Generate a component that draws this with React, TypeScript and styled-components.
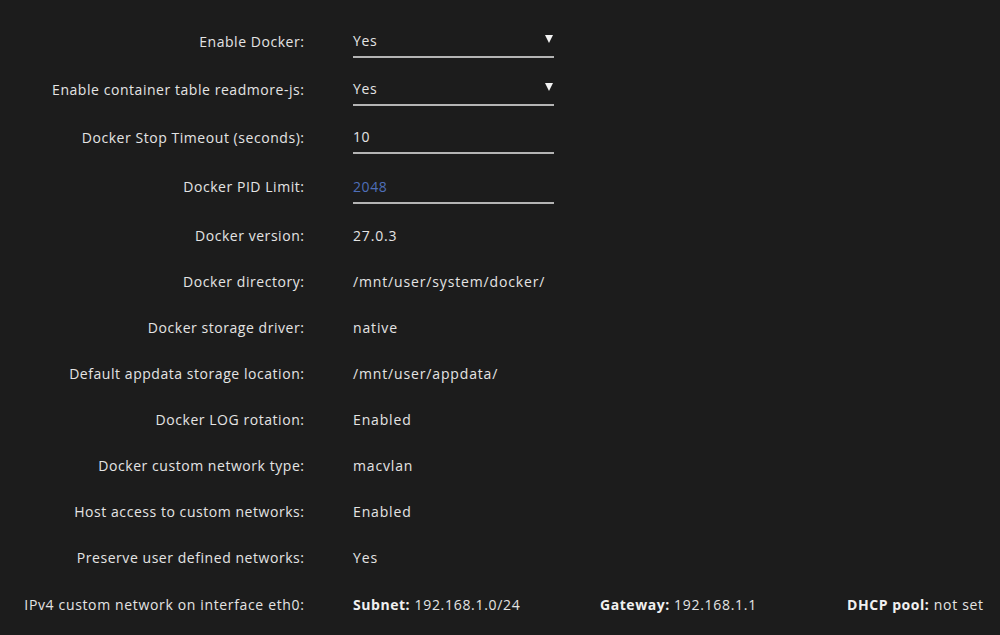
import React from "react";
import styled, { createGlobalStyle } from "styled-components";

const Global = createGlobalStyle`
  html, body { margin: 0; padding: 0; background: #1c1c1c; }
  body { font-family: "Open Sans", "Noto Sans", sans-serif; color: #e4e4e4; }
`;

const Page = styled.div`
  width: 1000px;
  height: 635px;
  overflow: hidden;
  background: #1c1c1c;
  padding-top: 17px;
  box-sizing: border-box;
`;

const Row = styled.div<{ $h: number }>`
  display: grid;
  grid-template-columns: 304px 1fr;
  column-gap: 49px;
  align-items: center;
  height: ${(p) => p.$h}px;
  font-size: 14px;
  letter-spacing: 0.55px;
`;

const Label = styled.div<{ $wide?: boolean }>`
  text-align: right;
  white-space: nowrap;
  color: #e4e4e4;
  margin-right: -0.55px;
  letter-spacing: ${(p) => (p.$wide ? "0.65px" : "0.55px")};
`;

const Value = styled.div`
  white-space: nowrap;
  color: #e4e4e4;
  letter-spacing: 0.85px;
`;

const Field = styled.div<{ $accent?: boolean }>`
  position: relative;
  width: 201px;
  height: 34px;
  box-sizing: border-box;
  padding-top: 1px;
  display: flex;
  align-items: center;
  border-bottom: 2px solid #b4b4b4;
  letter-spacing: 0.6px;
  color: ${(p) => (p.$accent ? "#4f6fb8" : "#e4e4e4")};
`;

const Arrow = styled.span`
  position: absolute;
  right: 1px;
  top: 11px;
  width: 0;
  height: 0;
  border-left: 4px solid transparent;
  border-right: 4px solid transparent;
  border-top: 8px solid #f2f2f2;
`;

const Network = styled.div`
  display: grid;
  grid-template-columns: 247px 247px 1fr;
  white-space: nowrap;
  letter-spacing: 0.7px;
`;

const B = styled.b`
  font-weight: 700;
  color: #f0f0f0;
  letter-spacing: 0.55px;
`;

const rows: [string, string][] = [
  ["Docker version:", "27.0.3"],
  ["Docker directory:", "/mnt/user/system/docker/"],
  ["Docker storage driver:", "native"],
  ["Default appdata storage location:", "/mnt/user/appdata/"],
  ["Docker LOG rotation:", "Enabled"],
  ["Docker custom network type:", "macvlan"],
  ["Host access to custom networks:", "Enabled"],
  ["Preserve user defined networks:", "Yes"],
];

export default function App() {
  return (
    <>
      <Global />
      <Page>
        <Row $h={48}>
          <Label>Enable Docker:</Label>
          <Value>
            <Field>
              Yes
              <Arrow />
            </Field>
          </Value>
        </Row>
        <Row $h={48}>
          <Label>Enable container table readmore-js:</Label>
          <Value>
            <Field>
              Yes
              <Arrow />
            </Field>
          </Value>
        </Row>
        <Row $h={48}>
          <Label>Docker Stop Timeout (seconds):</Label>
          <Value>
            <Field>10</Field>
          </Value>
        </Row>
        <Row $h={51}>
          <Label>Docker PID Limit:</Label>
          <Value>
            <Field $accent>2048</Field>
          </Value>
        </Row>
        {rows.map(([l, v]) => (
          <Row key={l} $h={46}>
            <Label>{l}</Label>
            <Value>{v}</Value>
          </Row>
        ))}
        <Row $h={48}>
          <Label $wide>IPv4 custom network on interface eth0:</Label>
          <Network>
            <span>
              <B>Subnet:</B> 192.168.1.0/24
            </span>
            <span>
              <B>Gateway:</B> 192.168.1.1
            </span>
            <span>
              <B>DHCP pool:</B> not set
            </span>
          </Network>
        </Row>
      </Page>
    </>
  );
}
